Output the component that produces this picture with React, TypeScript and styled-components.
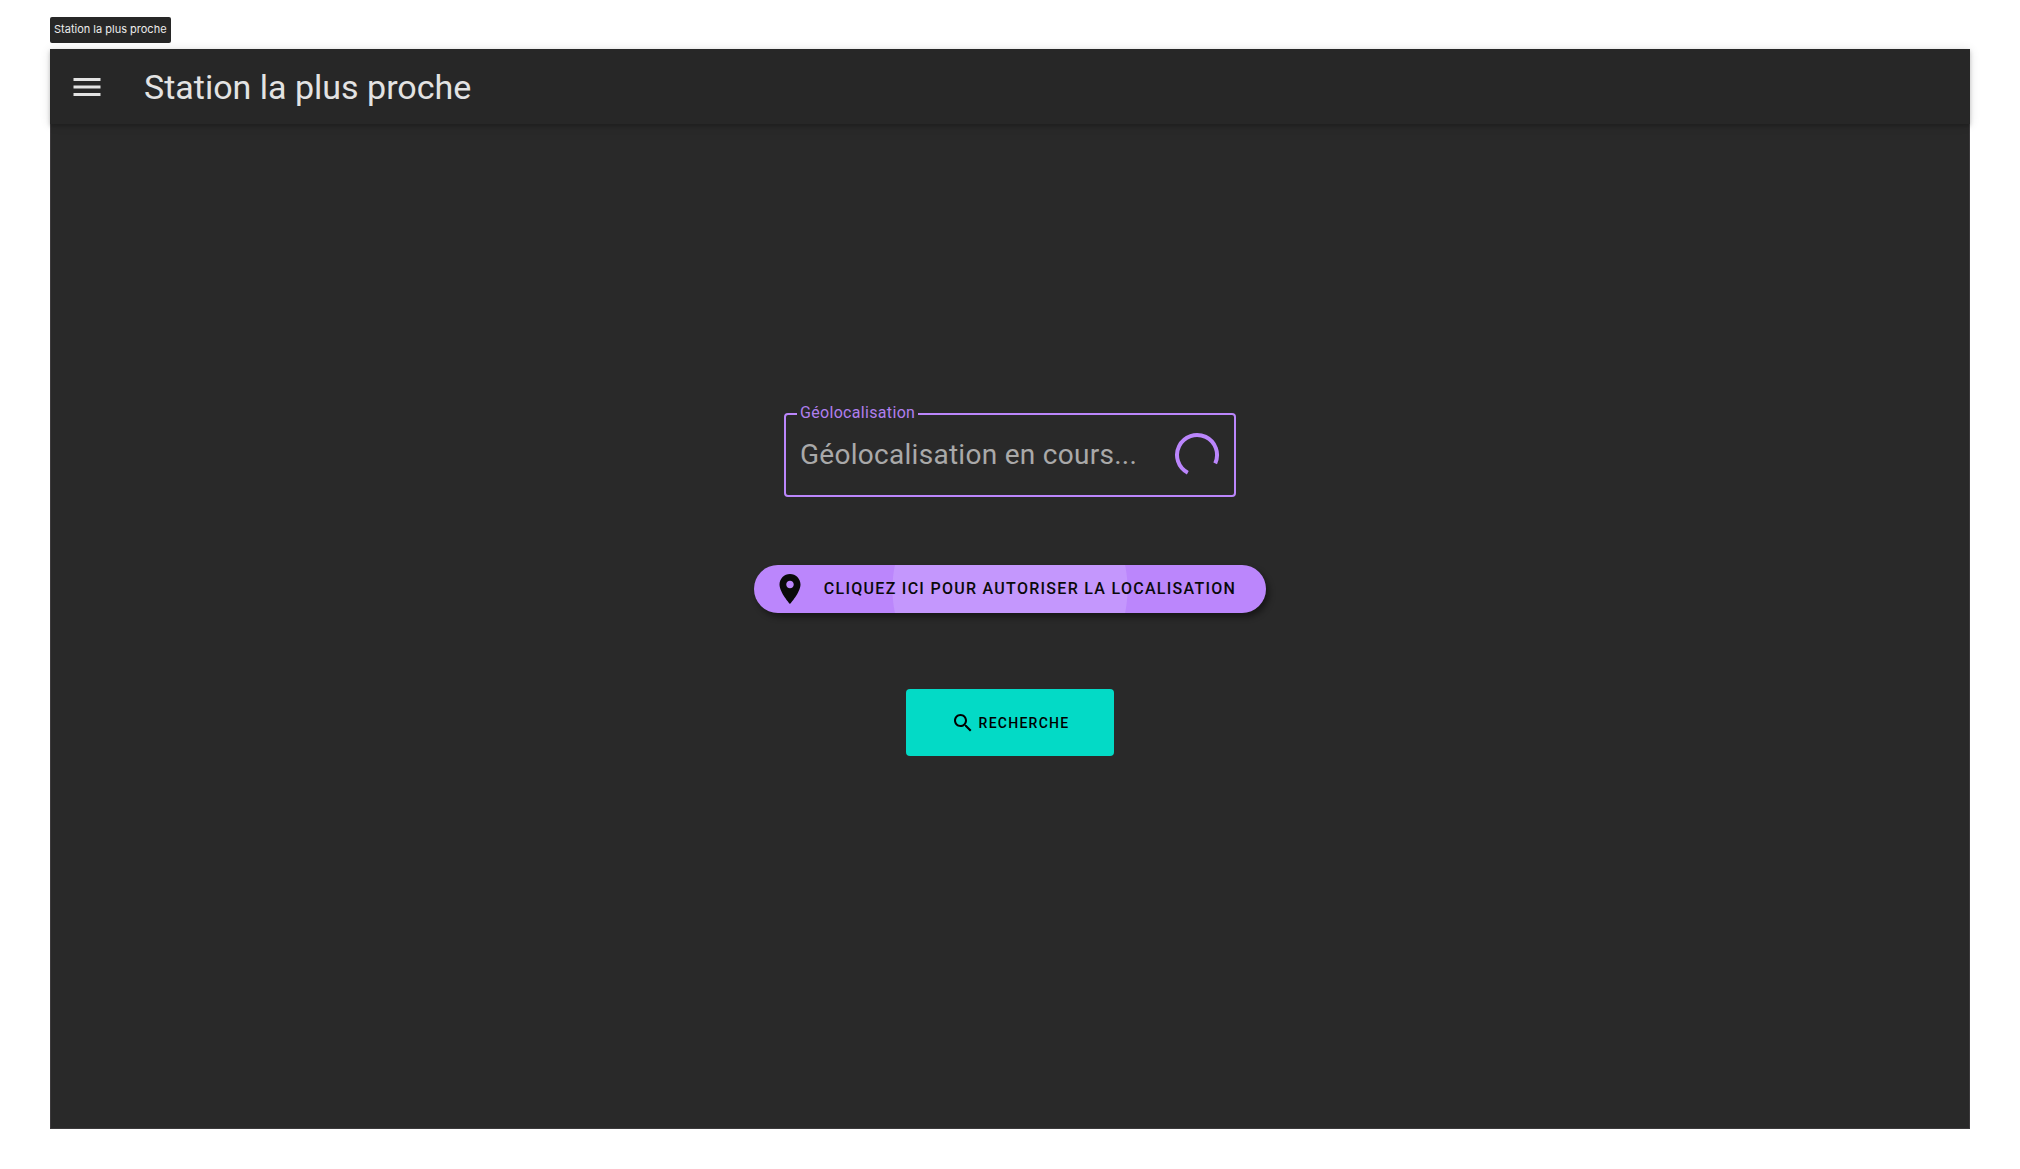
import React from "react";
import styled, { createGlobalStyle } from "styled-components";

const GlobalStyle = createGlobalStyle`
  *, *::before, *::after { box-sizing: border-box; }
  body {
    margin: 0;
    background: #ffffff;
    font-family: Roboto, "Liberation Sans", sans-serif;
  }
  button, input { font-family: inherit; }
`;

const Page = styled.div`
  display: flex;
  flex-direction: column;
  align-items: flex-start;
  gap: 6px;
  min-height: 100vh;
  padding: 17px 50px 40px;
`;

const FrameTag = styled.span`
  padding: 3px 4px 5px;
  border-radius: 2px;
  background: #272727;
  color: #ececec;
  font-family: Inter, sans-serif;
  font-size: 11px;
  line-height: 18px;
`;

const Screen = styled.div`
  display: flex;
  flex-direction: column;
  flex: 1;
  align-self: stretch;
  background: #292929;
  box-shadow: inset 0 0 0 1px #3c3a3c;
`;

const AppBar = styled.header`
  display: flex;
  align-items: center;
  gap: 39px;
  height: 75px;
  padding: 0 19px;
  background: #272727;
  box-shadow: 0 2px 4px rgba(0, 0, 0, 0.2), 0 1px 10px rgba(0, 0, 0, 0.12);
`;

const MenuButton = styled.button`
  display: flex;
  padding: 0;
  border: 0;
  background: none;
  color: #e3e3e3;
`;

const Title = styled.h1`
  margin: 0;
  color: #e3e3e3;
  font-size: 34px;
  font-weight: 400;
  line-height: 40px;
`;

const Main = styled.main`
  display: flex;
  flex: 1;
  flex-direction: column;
  align-items: center;
  justify-content: center;
  padding-bottom: 84px;
`;

const Form = styled.form`
  display: flex;
  flex-direction: column;
  align-items: center;
`;

const Field = styled.div`
  position: relative;
  display: flex;
  align-items: center;
  gap: 16px;
  width: 452px;
  height: 84px;
  padding: 0 14px;
  border: 2px solid #bb86fc;
  border-radius: 4px;
`;

const FieldLabel = styled.label`
  position: absolute;
  top: -12px;
  left: 11px;
  padding: 0 3px;
  background: #292929;
  color: #b07fee;
  font-size: 16px;
  line-height: 20px;
  letter-spacing: 0.02em;
`;

const FieldInput = styled.input`
  flex: 1;
  min-width: 0;
  padding: 0;
  border: 0;
  outline: 0;
  background: none;
  color: #a9a9a9;
  font-size: 28px;
  line-height: 36px;
  letter-spacing: 0.01em;
`;

const LocateButton = styled.button`
  display: flex;
  align-items: center;
  gap: 16px;
  height: 48px;
  margin-top: 68px;
  padding: 0 30px 0 18px;
  border: 0;
  border-radius: 24px;
  background: radial-gradient(circle at center, #c497fd 117px, #bb86fc 118px);
  box-shadow: 3px 4px 6px rgba(0, 0, 0, 0.45);
  color: #0a0a0a;
  font-size: 16px;
  font-weight: 500;
  line-height: 20px;
  letter-spacing: 0.08em;
`;

const SearchButton = styled.button`
  display: flex;
  align-items: center;
  justify-content: center;
  gap: 4px;
  width: 208px;
  height: 67px;
  margin-top: 76px;
  padding: 0;
  border: 0;
  border-radius: 4px;
  background: #03dac6;
  color: #000000;
  font-size: 14px;
  font-weight: 500;
  line-height: 20px;
  letter-spacing: 0.09em;
`;

type IconProps = { size: number; path: string };

const Icon = ({ size, path }: IconProps) => (
  <svg width={size} height={size} viewBox="0 0 24 24" fill="currentColor" aria-hidden="true">
    <path d={path} />
  </svg>
);

const MENU = "M3 18h18v-2H3v2zm0-5h18v-2H3v2zm0-7v2h18V6H3z";
const PLACE =
  "M12 2C8.13 2 5 5.13 5 9c0 5.25 7 13 7 13s7-7.75 7-13c0-3.87-3.13-7-7-7zm0 9.5c-1.38 0-2.5-1.12-2.5-2.5s1.12-2.5 2.5-2.5 2.5 1.12 2.5 2.5-1.12 2.5-2.5 2.5z";
const SEARCH =
  "M15.5 14h-.79l-.28-.27C15.41 12.59 16 11.11 16 9.5 16 5.91 13.09 3 9.5 3S3 5.91 3 9.5 5.91 16 9.5 16c1.61 0 3.09-.59 4.23-1.57l.27.28v.79l5 4.99L20.49 19l-4.99-5zm-6 0C7.01 14 5 11.99 5 9.5S7.01 5 9.5 5 14 7.01 14 9.5 11.99 14 9.5 14z";

const Spinner = () => (
  <svg width="46" height="46" viewBox="0 0 46 46" fill="none" role="img" aria-label="Chargement">
    <path d="M13.8 40.7 A20 20 0 1 1 41.2 31.3" stroke="#bb86fc" strokeWidth="4" />
  </svg>
);

export default function App() {
  return (
    <>
      <GlobalStyle />
      <Page>
        <FrameTag>Station la plus proche</FrameTag>
        <Screen>
          <AppBar>
            <MenuButton type="button" aria-label="Menu">
              <Icon size={36} path={MENU} />
            </MenuButton>
            <Title>Station la plus proche</Title>
          </AppBar>
          <Main>
            <Form onSubmit={(event) => event.preventDefault()}>
              <Field>
                <FieldLabel htmlFor="geolocation">Géolocalisation</FieldLabel>
                <FieldInput id="geolocation" type="text" readOnly value="Géolocalisation en cours..." />
                <Spinner />
              </Field>
              <LocateButton type="button">
                <Icon size={36} path={PLACE} />
                CLIQUEZ ICI POUR AUTORISER LA LOCALISATION
              </LocateButton>
              <SearchButton type="submit">
                <Icon size={24} path={SEARCH} />
                RECHERCHE
              </SearchButton>
            </Form>
          </Main>
        </Screen>
      </Page>
    </>
  );
}
